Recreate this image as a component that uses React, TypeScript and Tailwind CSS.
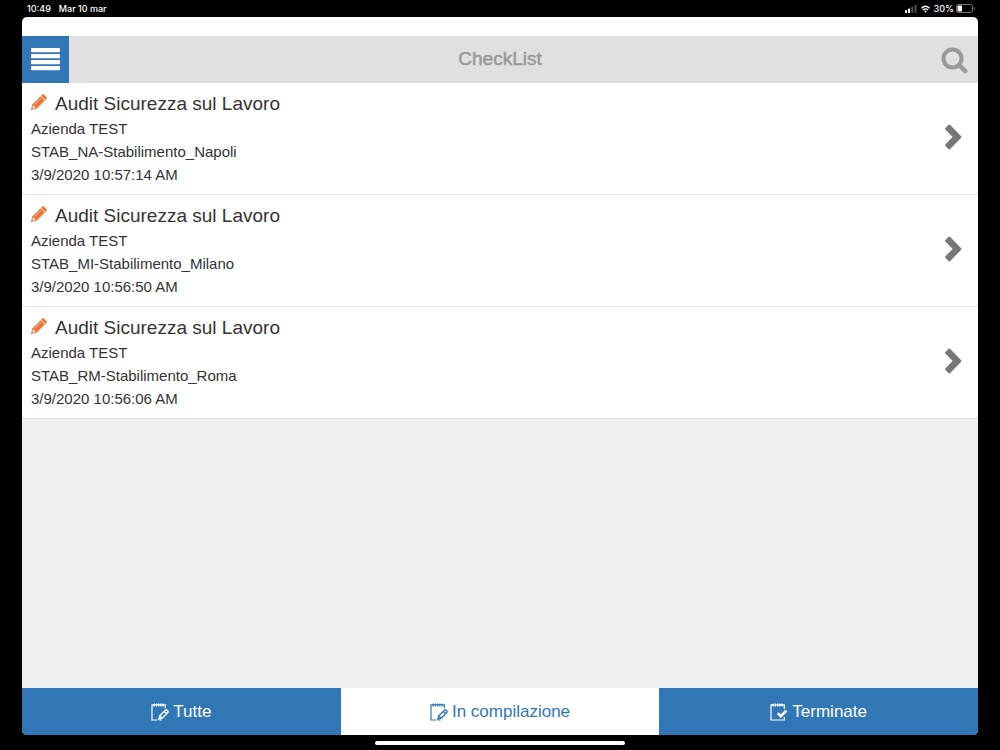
import type { ReactNode } from 'react';

type Checklist = {
  title: string;
  company: string;
  site: string;
  date: string;
};

const checklists: Checklist[] = [
  {
    title: 'Audit Sicurezza sul Lavoro',
    company: 'Azienda TEST',
    site: 'STAB_NA-Stabilimento_Napoli',
    date: '3/9/2020 10:57:14 AM',
  },
  {
    title: 'Audit Sicurezza sul Lavoro',
    company: 'Azienda TEST',
    site: 'STAB_MI-Stabilimento_Milano',
    date: '3/9/2020 10:56:50 AM',
  },
  {
    title: 'Audit Sicurezza sul Lavoro',
    company: 'Azienda TEST',
    site: 'STAB_RM-Stabilimento_Roma',
    date: '3/9/2020 10:56:06 AM',
  },
];

function PencilIcon() {
  return (
    <svg className="size-4" viewBox="0 0 16 16" fill="#f07530" aria-hidden="true">
      <path d="M11.3 0.6Q12.1 -0.1 12.9 0.6L15.5 3.2Q16.2 4 15.5 4.8L14.3 6L10.1 1.8Z" />
      <path
        fillRule="evenodd"
        d="M9.6 2.3L13.8 6.5L5.6 14.7L0 16L1.2 10.6ZM2.1 11.6L1.5 13.9L2.2 14.5L4.5 13.9L4.2 12.9L3.2 12.6L3 11.7ZM9.2 4.4L4 9.6L4.4 10L9.6 4.8Z"
      />
    </svg>
  );
}

function ChevronIcon() {
  return (
    <svg className="mb-1 h-7 w-[18px] shrink-0" viewBox="0 0 18 28" fill="#777777" aria-hidden="true">
      <path d="M1.3 5.2L4.6 1.8Q5.3 1.2 6 1.8L17.2 13.2Q17.8 14 17.2 14.8L6 26.2Q5.3 26.8 4.6 26.2L1.3 22.8Q0.7 22.1 1.3 21.4L8.6 14L1.3 6.6Q0.7 5.9 1.3 5.2Z" />
    </svg>
  );
}

function NotepadIcon({ children }: { children: ReactNode }) {
  return (
    <svg
      className="size-[18px]"
      viewBox="0 0 18 18"
      fill="none"
      stroke="currentColor"
      strokeWidth="1.2"
      aria-hidden="true"
    >
      <path d="M3.2 0.5V3.5M5.4 0.5V3.5M7.6 0.5V3.5M9.8 0.5V3.5M12 0.5V3.5" />
      <path d="M2.5 1.8H13" />
      {children}
    </svg>
  );
}

function NotepadPencil() {
  return (
    <NotepadIcon>
      <path d="M3 1.8H1V17H6.5M12.5 1.8H14.3V5.2" />
      <path
        d="M8.8 12.8L14.4 7.2Q15.2 6.5 16 7.2L16.8 8Q17.4 8.8 16.8 9.6L11.2 15.2L8 16ZM13.3 8.4L15.7 10.8M8.9 13L11 15.1"
        strokeWidth="1.4"
      />
      <path d="M8.2 17H10.5" />
    </NotepadIcon>
  );
}

function NotepadCheck() {
  return (
    <NotepadIcon>
      <path d="M3 1.8H1V17H14.3V14M12.5 1.8H14.3V6" />
      <path d="M7.7 10.2L10.8 13.2L16.4 7.6" strokeWidth="2.6" />
    </NotepadIcon>
  );
}

const tabs = [
  { label: 'Tutte', icon: <NotepadPencil />, active: false },
  { label: 'In compilazione', icon: <NotepadPencil />, active: true },
  { label: 'Terminate', icon: <NotepadCheck />, active: false },
];

function StatusBar() {
  return (
    <div className="flex h-[17px] shrink-0 items-center justify-between pr-[25px] pl-[27px] font-['Inter',sans-serif] text-[9px] leading-4 font-medium text-white">
      <div className="flex gap-2">
        <span>10:49</span>
        <span>Mar 10 mar</span>
      </div>
      <div className="flex items-center gap-1">
        <svg className="h-2 w-3" viewBox="0 0 12 8" fill="currentColor" aria-hidden="true">
          <rect x="0" y="5" width="2" height="3" rx="0.5" />
          <rect x="3" y="3.5" width="2" height="4.5" rx="0.5" />
          <rect x="6.3" y="1.8" width="2" height="6.2" rx="0.5" opacity="0.3" />
          <rect x="9.6" y="0" width="2" height="8" rx="0.5" opacity="0.3" />
        </svg>
        <svg
          className="h-2 w-[9px]"
          viewBox="0 0 9 8"
          fill="none"
          stroke="currentColor"
          strokeWidth="1.3"
          aria-hidden="true"
        >
          <path d="M0.5 3.2Q4.5 -0.6 8.5 3.2M2 5Q4.5 2.7 7 5" />
          <path d="M3.1 6L4.5 7.7L5.9 6Q4.5 5 3.1 6Z" fill="currentColor" stroke="none" />
        </svg>
        <span>30%</span>
        <svg className="-ml-0.5 h-[9px] w-[19px]" viewBox="0 0 19 9" fill="none" aria-hidden="true">
          <rect x="0.5" y="0.5" width="16" height="8" rx="2" stroke="#777777" />
          <rect x="1.5" y="1.5" width="4.5" height="6" rx="0.8" fill="#ffffff" />
          <path d="M17.8 3V6Q19 5.5 19 4.5T17.8 3Z" fill="#777777" />
        </svg>
      </div>
    </div>
  );
}

function Header() {
  return (
    <header className="flex h-[47px] shrink-0 items-center bg-[#e0e0e0]">
      <button
        type="button"
        aria-label="Menu"
        className="flex size-[47px] items-center justify-center bg-[#3277b5]"
      >
        <svg className="h-[23px] w-[29px]" viewBox="0 0 29 23" fill="#ffffff" aria-hidden="true">
          <rect y="0" width="29" height="4.3" rx="1" />
          <rect y="6" width="29" height="4.3" rx="1" />
          <rect y="12" width="29" height="4.3" rx="1" />
          <rect y="18" width="29" height="4.3" rx="1" />
        </svg>
      </button>
      <h1 className="flex-1 text-center text-[19px] text-[#999999] [-webkit-text-stroke:0.5px_#999999]">
        CheckList
      </h1>
      <button type="button" aria-label="Cerca" className="flex size-[47px] items-center justify-center">
        <svg
          className="size-7"
          viewBox="0 0 28 28"
          fill="none"
          stroke="#999999"
          strokeLinecap="round"
          aria-hidden="true"
        >
          <circle cx="11.5" cy="12.5" r="9" strokeWidth="4" />
          <path d="M18.5 19.5L24.2 25.2" strokeWidth="4.5" />
        </svg>
      </button>
    </header>
  );
}

function ChecklistRow({ item }: { item: Checklist }) {
  return (
    <li className="border-b border-[#e2e2e2] bg-white">
      <a href="#" className="flex items-center justify-between py-2 pr-4 pl-[9px] text-[#333333]">
        <div className="text-[15px] leading-[23px]">
          <h2 className="flex gap-2 text-[19px] leading-[26px]">
            <span className="pt-[3px]">
              <PencilIcon />
            </span>
            {item.title}
          </h2>
          <p>{item.company}</p>
          <p>{item.site}</p>
          <p>{item.date}</p>
        </div>
        <ChevronIcon />
      </a>
    </li>
  );
}

export default function App() {
  return (
    <div className="flex h-screen flex-col bg-black font-['Liberation_Sans',Arial,sans-serif]">
      <StatusBar />
      <div className="mx-[22px] flex min-h-0 flex-1 flex-col overflow-hidden rounded-[5px] bg-white pt-[19px]">
        <Header />
        <main className="flex-1 overflow-y-auto bg-[#efefef]">
          <ul>
            {checklists.map((item) => (
              <ChecklistRow key={item.date} item={item} />
            ))}
          </ul>
        </main>
        <nav className="grid h-[47px] shrink-0 grid-cols-3">
          {tabs.map((tab) => (
            <button
              key={tab.label}
              type="button"
              aria-pressed={tab.active}
              className={`flex items-center justify-center gap-1 text-[17px] ${
                tab.active ? 'bg-white text-[#3277b5]' : 'bg-[#3277b5] text-white'
              }`}
            >
              {tab.icon}
              {tab.label}
            </button>
          ))}
        </nav>
      </div>
      <div className="flex h-[15px] shrink-0 items-center justify-center">
        <div className="h-1 w-1/4 rounded-full bg-white" />
      </div>
    </div>
  );
}
